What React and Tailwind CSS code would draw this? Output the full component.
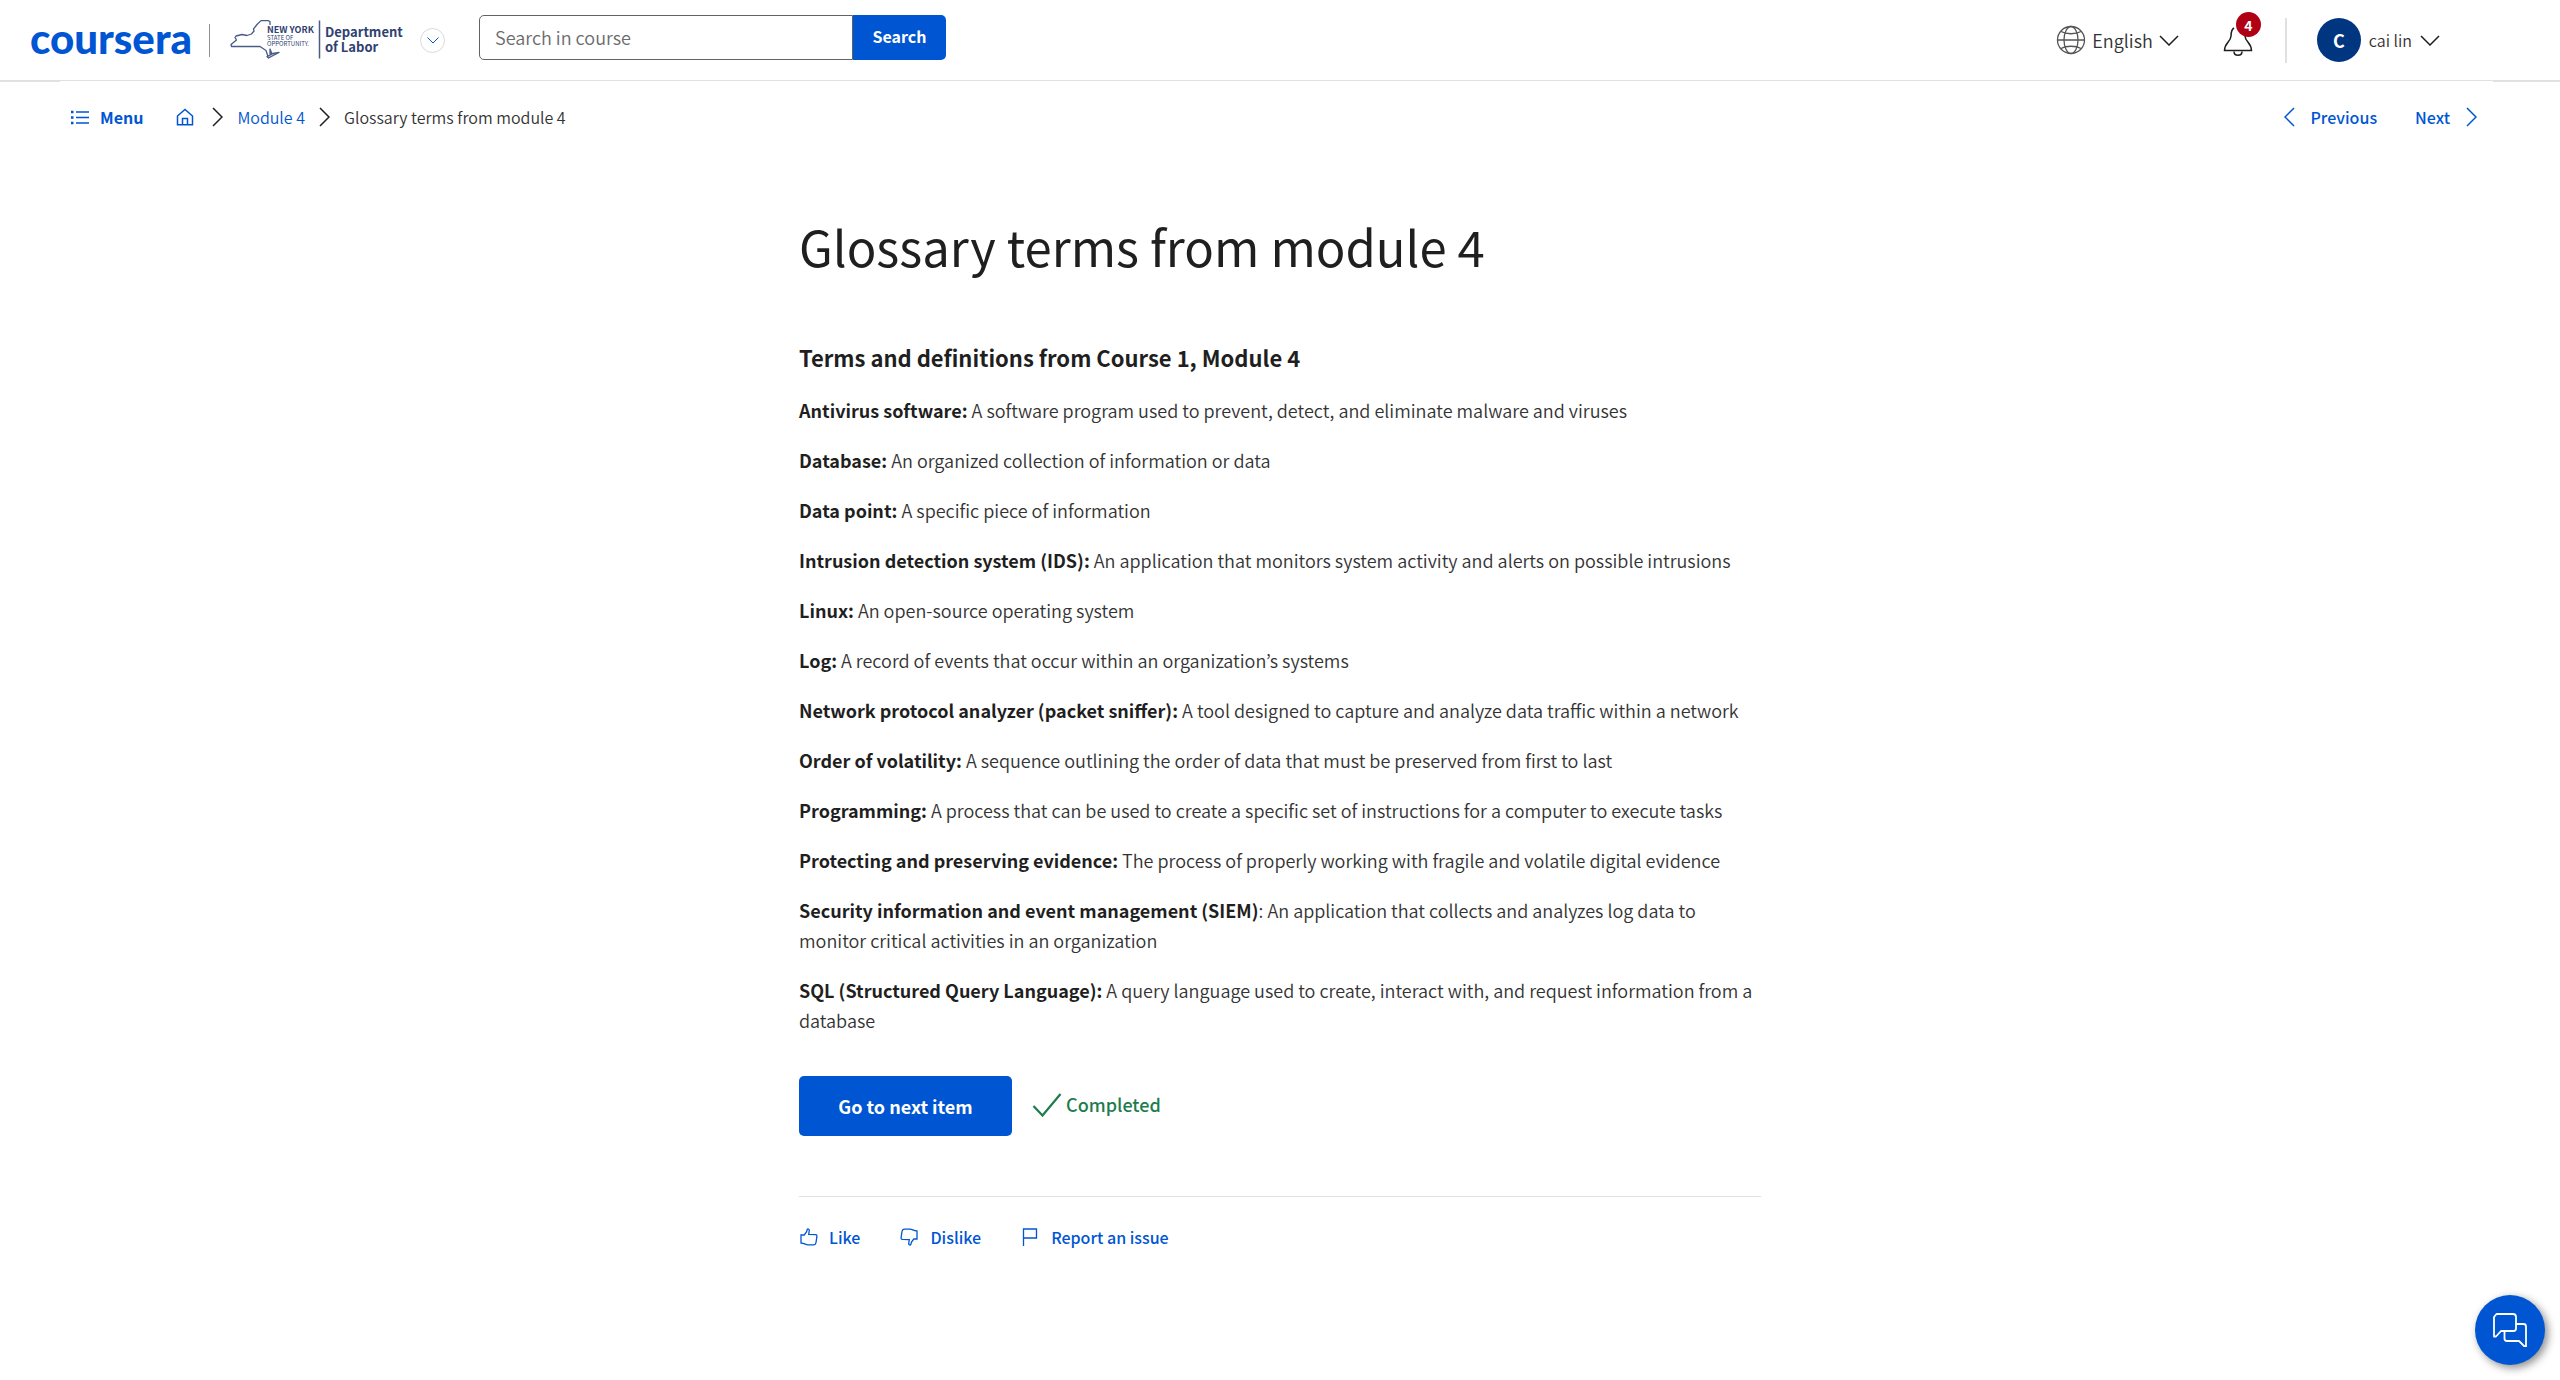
const TERMS = [
  ["Antivirus software:", "A software program used to prevent, detect, and eliminate malware and viruses"],
  ["Database:", "An organized collection of information or data"],
  ["Data point:", "A specific piece of information"],
  ["Intrusion detection system (IDS):", "An application that monitors system activity and alerts on possible intrusions"],
  ["Linux:", "An open-source operating system"],
  ["Log:", "A record of events that occur within an organization’s systems"],
  ["Network protocol analyzer (packet sniffer):", "A tool designed to capture and analyze data traffic within a network"],
  ["Order of volatility:", "A sequence outlining the order of data that must be preserved from first to last"],
  ["Programming:", "A process that can be used to create a specific set of instructions for a computer to execute tasks"],
  ["Protecting and preserving evidence:", "The process of properly working with fragile and volatile digital evidence"],
  ["Security information and event management (SIEM)", "An application that collects and analyzes log data to monitor critical activities in an organization", ":"],
  ["SQL (Structured Query Language):", "A query language used to create, interact with, and request information from a database"],
];

function Chevron({ dir, className = "" }) {
  const d = {
    down: "M1 1l9 9 9-9",
    left: "M10 1l-9 9 9 9",
    right: "M1 1l9 9-9 9",
  }[dir];
  const box = dir === "down" ? "0 0 20 11" : "0 0 11 20";
  const size = dir === "down" ? "w-5 h-[11px]" : "w-[11px] h-5";
  return (
    <svg viewBox={box} className={`${size} shrink-0 ${className}`} fill="none" stroke="currentColor" strokeWidth="1.5" aria-hidden="true">
      <path d={d} />
    </svg>
  );
}

function PartnerLogo() {
  return (
    <svg viewBox="0 0 178 42" className="h-[42px] w-[178px]" aria-label="New York State Department of Labor" role="img">
      <g fill="none" stroke="#4a5b86" strokeWidth="1.3" strokeLinejoin="round">
        <path d="M40 6V2.5L38 1.6H31L27 5.5L23.500 10L24 12L21.500 15L17 16.500L12 15.500L6 17L5 18.500L6.500 21L1 25.500L1.500 27.500H30L36 31.500L38 37.500" />
        <path d="M40 30V35L49 33.500L38.500 39L37 37.500L42 35Z" fill="#4a5b86" fillOpacity=".35" />
      </g>
      <path d="M89.500 1.500V39.500" stroke="#4a5b86" strokeWidth="1.500" />
      <g fill="#2f4172" fontFamily="Noto Sans CJK KR, sans-serif">
        <text x="37" y="14" fontSize="9" fontWeight="700">NEW YORK</text>
        <text x="37" y="21" fontSize="6">STATE OF</text>
        <text x="37" y="27" fontSize="6">OPPORTUNITY.</text>
        <g fontSize="13" fontWeight="700">
          <text x="95" y="18">Department</text>
          <text x="95" y="33">of Labor</text>
        </g>
      </g>
    </svg>
  );
}

function Header() {
  return (
    <header>
      <div className="flex h-20 items-center pl-[30px] pr-[120px]">
        <a href="#home" className="flex h-10 w-[159px] items-center pb-1 font-[Lato] text-[42px] font-black leading-10 text-[#0056d2]">coursera</a>
        <span className="ml-5 h-[33px] w-px bg-[#8e8e8e]" />
        <div className="ml-5">
          <PartnerLogo />
        </div>
        <button type="button" aria-label="Switch program" className="ml-3 flex size-[25px] items-center justify-center rounded-full border border-[#dadada] text-[#0056d2]">
          <svg viewBox="0 0 12 7" className="h-[7px] w-3" fill="none" stroke="currentColor" aria-hidden="true">
            <path d="M.5.500l5.500 5.500L11.500.500" />
          </svg>
        </button>
        <form className="-mt-1.5 ml-[34px] flex h-[45px] w-[467px]" onSubmit={(e) => e.preventDefault()}>
          <input
            type="text"
            aria-label="Search in course"
            placeholder="Search in course"
            className="min-w-0 flex-1 rounded-l-[5px] border border-[#636363] px-[15px] text-lg font-[350] text-[#1f1f1f] placeholder:text-[#6b6b6b]"
          />
          <button type="submit" className="w-[93px] rounded-r-[5px] bg-[#0056d2] pb-0.5 text-base font-bold text-white">Search</button>
        </form>
        <div className="ml-auto flex items-center">
          <button type="button" className="flex items-center text-lg font-[350] text-[#333]">
            <svg viewBox="0 0 30 30" className="size-[30px]" fill="none" stroke="#555" strokeWidth="1.300" aria-hidden="true">
              <circle cx="15" cy="15" r="13.500" />
              <ellipse cx="15" cy="15" rx="7" ry="13.500" />
              <path d="M1.500 15h27M5 6.500c5 3 15 3 20 0M5 23.500c5-3 15-3 20 0" />
            </svg>
            <span className="ml-1.5">English</span>
            <Chevron dir="down" className="ml-1.5 text-[#1f1f1f]" />
          </button>
          <button type="button" aria-label="4 notifications" className="relative ml-11 h-8 w-[30px]">
            <svg viewBox="0 0 30 32" className="h-8 w-[30px]" fill="none" stroke="#1f1f1f" strokeWidth="1.500" aria-hidden="true">
              <path d="M11 4C8.500 5.500 8 8.500 8 12c0 5.500-6.500 7-6.500 14.500h27C28.500 19 22 17.500 22 12c0-3.500-.500-6.500-3-8" />
              <path d="M11 27.500c0 5 8 5 8 0" />
            </svg>
            <span className="absolute -top-3 left-[13px] flex size-[25px] items-center justify-center rounded-full bg-[#b00016] text-sm font-bold text-white">4</span>
          </button>
          <span className="ml-8 h-[45px] w-0.5 bg-[#e1e1e1]" />
          <button type="button" className="ml-[30px] flex items-center text-[#333]">
            <span className="flex size-11 items-center justify-center rounded-full bg-[#003580] text-lg font-bold text-white">C</span>
            <span className="ml-2 pb-px text-base font-[350]">cai lin</span>
            <Chevron dir="down" className="ml-2 text-[#1f1f1f]" />
          </button>
        </div>
      </div>
      <div className="h-px bg-[#e1e1e1]" />
      <div className="flex h-px justify-between">
        <span className="w-[60px] bg-[#e1e1e1]" />
        <span className="w-[67px] bg-[#e1e1e1]" />
      </div>
    </header>
  );
}

function SubNav() {
  return (
    <div className="flex h-[70px] items-center justify-between pl-[70px] pr-[83px] text-base text-[#0056d2]">
      <div className="flex items-center">
        <button type="button" className="flex items-center font-bold">
          <svg viewBox="0 0 20 16" className="h-4 w-5" fill="none" stroke="currentColor" strokeWidth="1.300" aria-hidden="true">
            <path d="M6 3h13M6 8.500h13M6 14h13" />
            <path d="M1 3h2.500M1 8.500h2.500M1 14h2.500" strokeWidth="2.500" />
          </svg>
          <span className="ml-2.5">Menu</span>
        </button>
        <nav aria-label="Breadcrumb" className="flex items-center font-[350]">
          <a href="#course" aria-label="Course home" className="ml-[33px]">
            <svg viewBox="0 0 18 18" className="size-[18px]" fill="none" stroke="currentColor" strokeWidth="1.500" aria-hidden="true">
              <path d="M1.500 8L9 1.500 16.500 8v8.800h-15zM6.500 16.800v-6.300h5v6.300" />
            </svg>
          </a>
          <Chevron dir="right" className="ml-[18px] text-[#1f1f1f]" />
          <a href="#module-4" className="ml-3.5">Module 4</a>
          <Chevron dir="right" className="ml-3.5 text-[#1f1f1f]" />
          <span className="ml-3.5 text-[#333]">Glossary terms from module 4</span>
        </nav>
      </div>
      <div className="flex items-center pb-px font-medium">
        <a href="#previous" className="flex items-center">
          <Chevron dir="left" />
          <span className="ml-4">Previous</span>
        </a>
        <a href="#next" className="ml-[38px] flex items-center">
          <span>Next</span>
          <Chevron dir="right" className="ml-4" />
        </a>
      </div>
    </div>
  );
}

const THUMB = "M1 7h3.200L6.500 4 7.200 1.500C7.600.700 9.300.800 9.300 2.300L8.700 6.300l7 .400c1 .100 1.300.700 1.200 1.600L16 14.500c-.300 1.600-1 2.400-2.500 2.400H8c-2.500 0-3-1.600-7-1.900z";

export default function App() {
  return (
    <div className="min-h-screen bg-white font-['Noto_Sans_CJK_KR',sans-serif] text-[#1f1f1f]">
      <Header />
      <SubNav />
      <main className="mx-auto w-full max-w-[962px] pt-[58px]">
        <h1 className="text-[49px] leading-[72px]">Glossary terms from module 4</h1>
        <h2 className="mt-[60px] text-[22px] font-bold leading-[30px]">Terms and definitions from Course 1, Module 4</h2>
        <div className="mt-[23px] flex flex-col gap-5 text-lg font-[350] leading-[30px] text-[#333]">
          {TERMS.map(([term, text, sep = ""]) => (
            <p key={term}>
              <strong className="font-bold text-[#1f1f1f]">{term}</strong>{sep} {text}
            </p>
          ))}
        </div>
        <div className="mt-[41px] flex items-center">
          <button type="button" className="h-[60px] w-[213px] rounded-[5px] bg-[#0056d2] text-lg font-bold text-white">Go to next item</button>
          <div className="ml-5 flex items-center pb-0.5 text-lg font-medium text-[#1d7c4d]">
            <svg viewBox="0 0 30 24" className="h-6 w-[30px]" fill="none" stroke="currentColor" strokeWidth="2.200" aria-hidden="true">
              <path d="M1.500 13l9 9.500L28.500 1" />
            </svg>
            <span className="ml-1 pb-0.5">Completed</span>
          </div>
        </div>
        <hr className="mt-[60px] border-[#e1e1e1]" />
        <div className="mt-7 flex items-center gap-10 pl-px text-base font-medium text-[#0056d2]">
          <button type="button" className="flex items-center gap-[11px]">
            <svg viewBox="0 0 18 18" className="size-[18px]" fill="none" stroke="currentColor" strokeWidth="1.300" aria-hidden="true">
              <path d={THUMB} />
            </svg>
            Like
          </button>
          <button type="button" className="flex items-center gap-3">
            <svg viewBox="0 0 18 18" className="size-[18px]" fill="none" stroke="currentColor" strokeWidth="1.300" aria-hidden="true">
              <path d={THUMB} transform="rotate(180 9 9)" />
            </svg>
            Dislike
          </button>
          <button type="button" className="flex items-center gap-3">
            <svg viewBox="0 0 18 18" className="size-[18px]" fill="none" stroke="currentColor" strokeWidth="1.300" aria-hidden="true">
              <path d="M2.500 18V1h13v9h-13" />
            </svg>
            Report an issue
          </button>
        </div>
      </main>
      <button type="button" aria-label="Open chat" className="fixed bottom-[15px] right-[15px] flex size-[70px] items-center justify-center rounded-full bg-[#0056d2] text-white shadow-[3px_3px_8px_rgba(0,0,0,0.45)]">
        <svg viewBox="0 0 34 34" className="size-[34px]" fill="none" stroke="currentColor" strokeWidth="1.800" strokeLinejoin="round" aria-hidden="true">
          <path d="M3.500 1H20c1.700 0 3 1.300 3 3v11.500c0 1.500-1 2.500-2.500 2.500H8l-5 5.500H1V4z" />
          <path d="M23 11h7.500c1.500 0 2.500 1 2.500 2.500V33.500h-1.500L26 28H14c-1.500 0-2.500-1-2.500-2.500V18" />
        </svg>
      </button>
    </div>
  );
}
